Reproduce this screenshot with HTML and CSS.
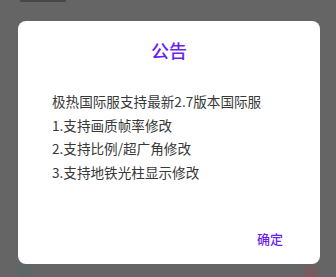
FILE: index.html
```html
<!DOCTYPE html>
<html lang="zh-CN">
<head>
<meta charset="utf-8">
<link rel="stylesheet" href="styles.css">
</head>
<body>
<div class="screen">
  <div class="peek"></div>
  <div class="dialog">
    <div class="title">公告</div>
    <div class="message">
      <div class="line">极热国际服支持最新2.7版本国际服</div>
      <div class="line">1.支持画质帧率修改</div>
      <div class="line">2.支持比例/超广角修改</div>
      <div class="line">3.支持地铁光柱显示修改</div>
    </div>
    <div class="actions">
      <span class="btn">确定</span>
    </div>
  </div>
  <div class="under">
    <div class="tab tab-teal"></div>
    <div class="tab tab-red"></div>
  </div>
</div>
</body>
</html>
```

FILE: styles.css
```css
html, body {
  margin: 0;
  padding: 0;
}
body {
  background: #656565;
  font-family: "Noto Sans CJK SC", "Noto Sans", sans-serif;
  width: 336px;
  height: 277px;
  overflow: hidden;
}
.screen {
  display: flex;
  flex-direction: column;
  height: 277px;
}
.peek {
  height: 2px;
  width: 46px;
  margin-left: 20px;
  background: #474747;
  border-radius: 0 0 1px 1px;
}
.dialog {
  box-sizing: border-box;
  margin: 19px 0 0 18px;
  width: 302px;
  height: 243px;
  background: #ffffff;
  border-radius: 8px;
  padding-top: 17px;
  display: flex;
  flex-direction: column;
}
.title {
  text-align: center;
  font-size: 18px;
  line-height: 24px;
  color: #6a1fee;
  font-weight: 500;
}
.message {
  margin-top: 28px;
  padding-left: 34px;
  font-size: 13.6px;
  line-height: 23.5px;
  color: #383838;
}
.actions {
  margin-top: auto;
  display: flex;
  justify-content: flex-end;
  padding: 0 29px 13px 0;
}
.btn {
  font-size: 13px;
  line-height: 24px;
  padding: 0 8px;
  color: #6a1fee;
  font-weight: 500;
}
.under {
  display: flex;
  justify-content: space-between;
  padding: 2px 18px 0 18px;
  flex: 1;
}
.tab {
  width: 15px;
  border-radius: 4px 4px 0 0;
}
.tab-teal {
  background: #5d6766;
}
.tab-red {
  background: #765c5c;
}
```
